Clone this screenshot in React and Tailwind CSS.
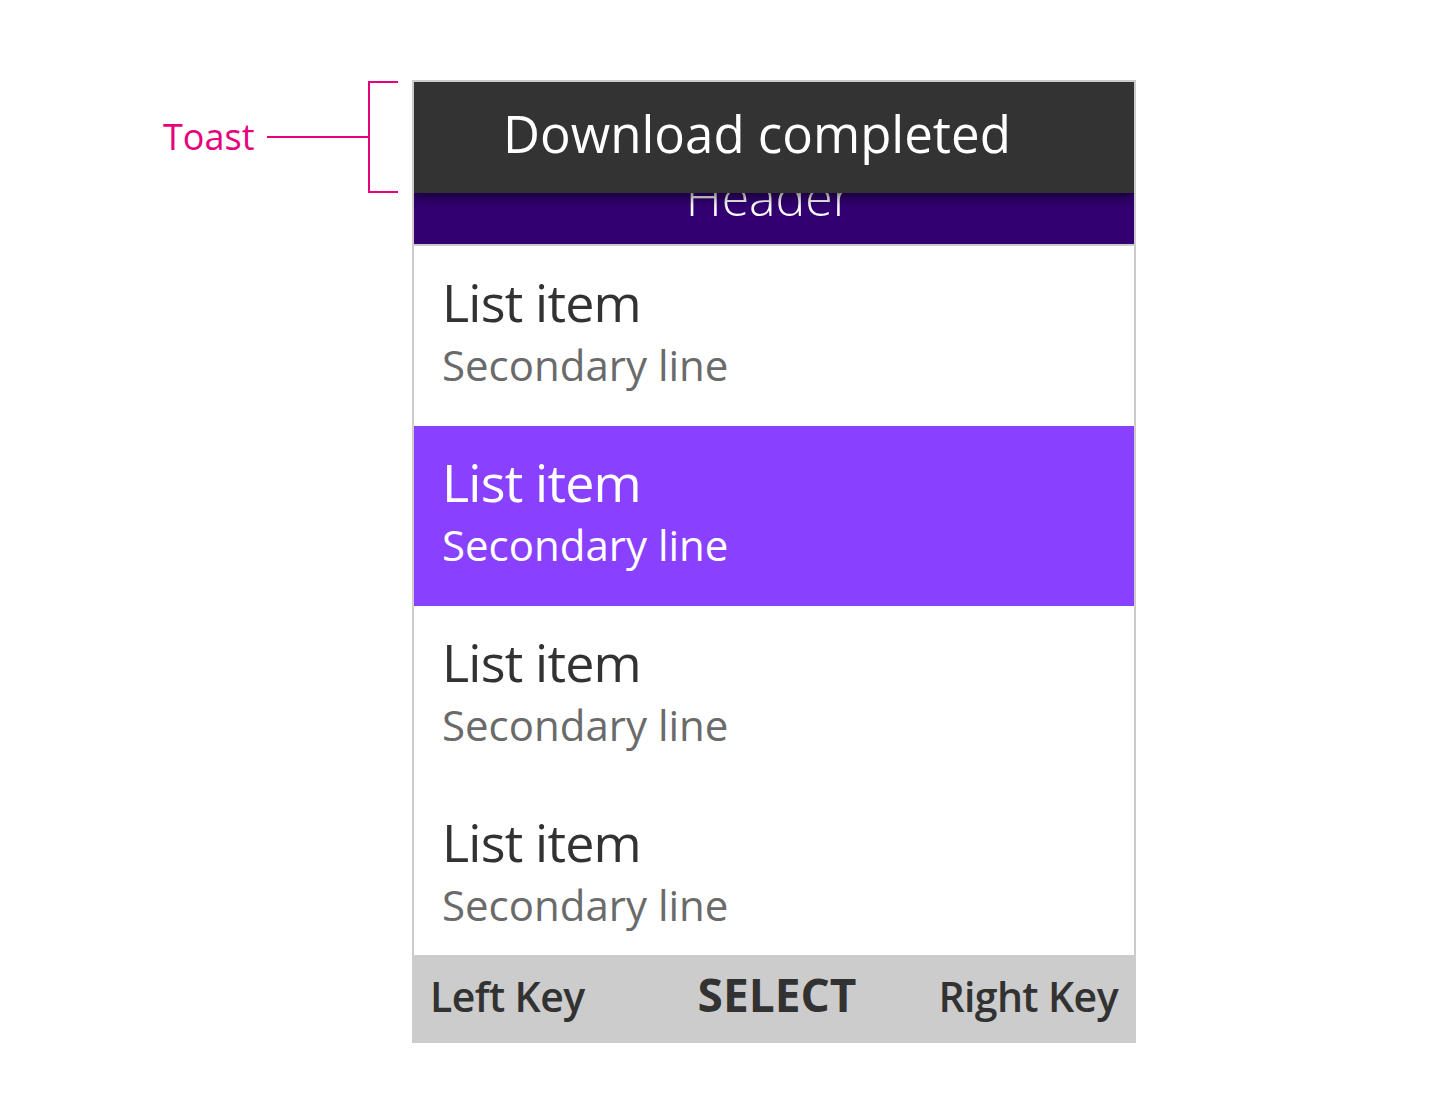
import React from 'react';

const items = [
  { primary: 'List item', secondary: 'Secondary line', selected: false },
  { primary: 'List item', secondary: 'Secondary line', selected: true },
  { primary: 'List item', secondary: 'Secondary line', selected: false },
  { primary: 'List item', secondary: 'Secondary line', selected: false },
];

const ListItem = ({ primary, secondary, selected }) => (
  <div className={`h-[180px] shrink-0 pl-[28px] pt-[26px] ${selected ? 'bg-[#8940ff]' : 'bg-white'}`}>
    <div className={`text-[52px] leading-[60px] tracking-[-0.8px] ${selected ? 'text-white' : 'text-[#323232]'}`}>{primary}</div>
    <div className={`mt-[3px] text-[42px] leading-[60px] ${selected ? 'text-white' : 'text-[#6a6a6a]'}`}>{secondary}</div>
  </div>
);

const App = () => {
  return (
    <div className="min-h-[1100px] bg-white pt-[80px] font-['Open_Sans',sans-serif]">
      <div className="flex items-start">
        {/* annotation */}
        <div className="ml-[163px] mt-[1px] flex h-[112px] w-[236px] items-center">
          <span className="text-[36px] leading-none text-[#e6007e]">Toast</span>
          <div className="ml-[13px] h-[2px] w-[101px] bg-[#e6007e]" />
          <div className="h-full w-[30px] border-y-2 border-l-2 border-[#e6007e]" />
        </div>

        {/* device frame */}
        <div className="ml-[13px] flex h-[963px] w-[724px] flex-col border-2 border-[#cccccc]">
          <div className="relative flex h-[164px] shrink-0 flex-col overflow-hidden border-b-2 border-[#cccccc] bg-[#330072]">
            <div className="absolute inset-x-0 bottom-[17px] pr-[10px] text-center text-[50px] font-light leading-[60px] text-white">Header</div>
            <div className="absolute inset-x-0 top-0 z-10 flex h-[111px] items-center bg-[#333333] pb-[9px] pl-[89px] shadow-[0_4px_12px_rgba(0,0,0,0.6)]">
              <span className="text-[51px] leading-none text-white">Download completed</span>
            </div>
          </div>
          <div className="flex flex-1 flex-col overflow-hidden bg-white">
            {items.map((it, i) => (
              <ListItem key={i} {...it} />
            ))}
          </div>
          <div className="grid h-[86px] shrink-0 grid-cols-3 items-baseline bg-[#cccccc] px-[16px] pt-[16px] leading-none text-[#323232]">
            <span className="text-[41px] font-semibold tracking-[-0.6px]">Left Key</span>
            <span className="pl-[6px] text-center text-[46px] font-bold">SELECT</span>
            <span className="text-right text-[41px] font-semibold tracking-[-0.6px]">Right Key</span>
          </div>
        </div>
      </div>
    </div>
  );
};

export default App;
